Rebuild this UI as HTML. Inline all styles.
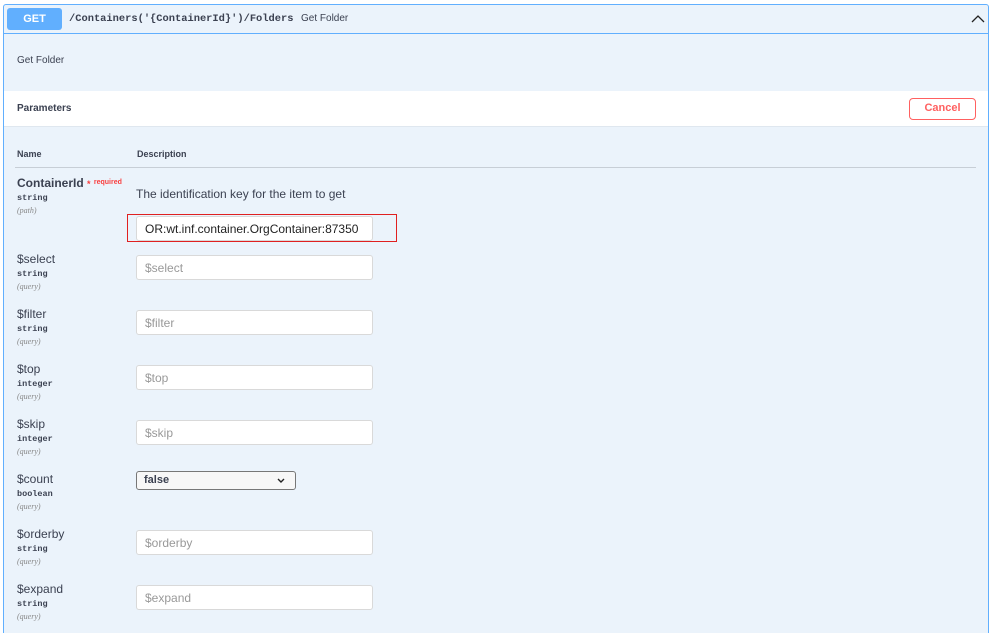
<!DOCTYPE html><html style="height:633px;overflow:hidden"><head><style>
body{margin:0;width:999px;height:633px;background:#fff;font-family:"Liberation Sans",sans-serif;position:relative;overflow:hidden}
.a{position:absolute}
.box{left:3px;top:4px;width:984px;height:640px;border:1px solid #61affe;border-radius:3px;background:#ebf3fb}
.mono{font-family:"Liberation Mono",monospace}
.nm{font-size:12px;color:#3b4151}
.ty{font-size:8.5px;font-family:"Liberation Mono",monospace;font-weight:bold;color:#3b4151}
.in{font-size:8px;font-family:"Liberation Serif",serif;font-style:italic;color:#888}
.inp{left:136px;height:25px;border:1px solid #d9d9d9;border-radius:3px;background:#fff;font-size:12px;color:#999;line-height:25px;padding-left:8px;box-sizing:border-box;width:237px}
</style></head><body>
<div class="a box"></div>
<div class="a" style="left:4px;top:33px;width:984px;height:1px;background:#61affe"></div>
<div class="a" style="left:7px;top:8px;width:55px;height:22px;background:#61affe;border-radius:3px;color:#fff;font-weight:bold;font-size:11px;text-align:center;line-height:22px">GET</div>
<div class="a mono" style="left:69px;top:13px;font-size:10.4px;font-weight:bold;color:#3b4151">/Containers('{ContainerId}')/Folders</div>
<div class="a" style="left:301px;top:13px;font-size:10px;color:#3b4151">Get Folder</div>
<svg class="a" style="left:971px;top:14px" width="14" height="10"><path d="M1 8 L7 2 L13 8" fill="none" stroke="#222" stroke-width="1.3"/></svg>
<div class="a" style="left:17px;top:55px;font-size:10px;color:#3b4151">Get Folder</div>
<div class="a" style="left:4px;top:91px;width:984px;height:35px;background:#fff;border-bottom:1px solid #dfe7ef"></div>
<div class="a" style="left:17px;top:103px;font-size:10px;font-weight:bold;color:#3b4151">Parameters</div>
<div class="a" style="left:909px;top:98px;border:1.5px solid #ff6060;border-radius:4px;color:#ff6060;font-size:11px;font-weight:bold;text-align:center;line-height:19px;box-sizing:border-box;width:67px;height:22px">Cancel</div>
<div class="a" style="left:17px;top:149px;font-size:9px;font-weight:bold;color:#3b4151">Name</div>
<div class="a" style="left:137px;top:149px;font-size:9px;font-weight:bold;color:#3b4151">Description</div>
<div class="a" style="left:15px;top:167px;width:961px;height:1px;background:#c7ced6"></div>

<div class="a nm" style="left:17px;top:176px;font-weight:bold">ContainerId <span style="color:#f93e3e;font-size:9px">*</span> <span style="color:#f93e3e;font-size:7px;position:relative;top:-3px">required</span></div>
<div class="a ty" style="left:17px;top:193px">string</div>
<div class="a in" style="left:17px;top:206px">(path)</div>
<div class="a" style="left:136px;top:187px;font-size:12px;color:#3b4151">The identification key for the item to get</div>
<div class="a" style="left:127px;top:214px;width:270px;height:28px;border:1.5px solid #e02020;box-sizing:border-box"></div>
<div class="a inp" style="top:216px;color:#222">OR:wt.inf.container.OrgContainer:87350</div>

<div class="a nm" style="left:17px;top:252px">$select</div><div class="a ty" style="left:17px;top:269px">string</div><div class="a in" style="left:17px;top:282px">(query)</div><div class="a inp" style="top:255px">$select</div>
<div class="a nm" style="left:17px;top:307px">$filter</div><div class="a ty" style="left:17px;top:324px">string</div><div class="a in" style="left:17px;top:337px">(query)</div><div class="a inp" style="top:310px">$filter</div>
<div class="a nm" style="left:17px;top:362px">$top</div><div class="a ty" style="left:17px;top:379px">integer</div><div class="a in" style="left:17px;top:392px">(query)</div><div class="a inp" style="top:365px">$top</div>
<div class="a nm" style="left:17px;top:417px">$skip</div><div class="a ty" style="left:17px;top:434px">integer</div><div class="a in" style="left:17px;top:447px">(query)</div><div class="a inp" style="top:420px">$skip</div>
<div class="a nm" style="left:17px;top:472px">$count</div><div class="a ty" style="left:17px;top:489px">boolean</div><div class="a in" style="left:17px;top:502px">(query)</div>
<div class="a" style="left:136px;top:471px;width:160px;height:19px;border:1px solid #777;border-radius:3px;background:#f7f7f7;box-sizing:border-box;font-size:11px;font-weight:bold;color:#3b4151;line-height:17px;padding-left:7px">false<svg style="position:absolute;right:10px;top:6px" width="8" height="5"><path d="M1 1 L4 4 L7 1" fill="none" stroke="#222" stroke-width="1.4"/></svg></div>
<div class="a nm" style="left:17px;top:527px">$orderby</div><div class="a ty" style="left:17px;top:544px">string</div><div class="a in" style="left:17px;top:557px">(query)</div><div class="a inp" style="top:530px">$orderby</div>
<div class="a nm" style="left:17px;top:582px">$expand</div><div class="a ty" style="left:17px;top:599px">string</div><div class="a in" style="left:17px;top:612px">(query)</div><div class="a inp" style="top:585px">$expand</div>
</body></html>
